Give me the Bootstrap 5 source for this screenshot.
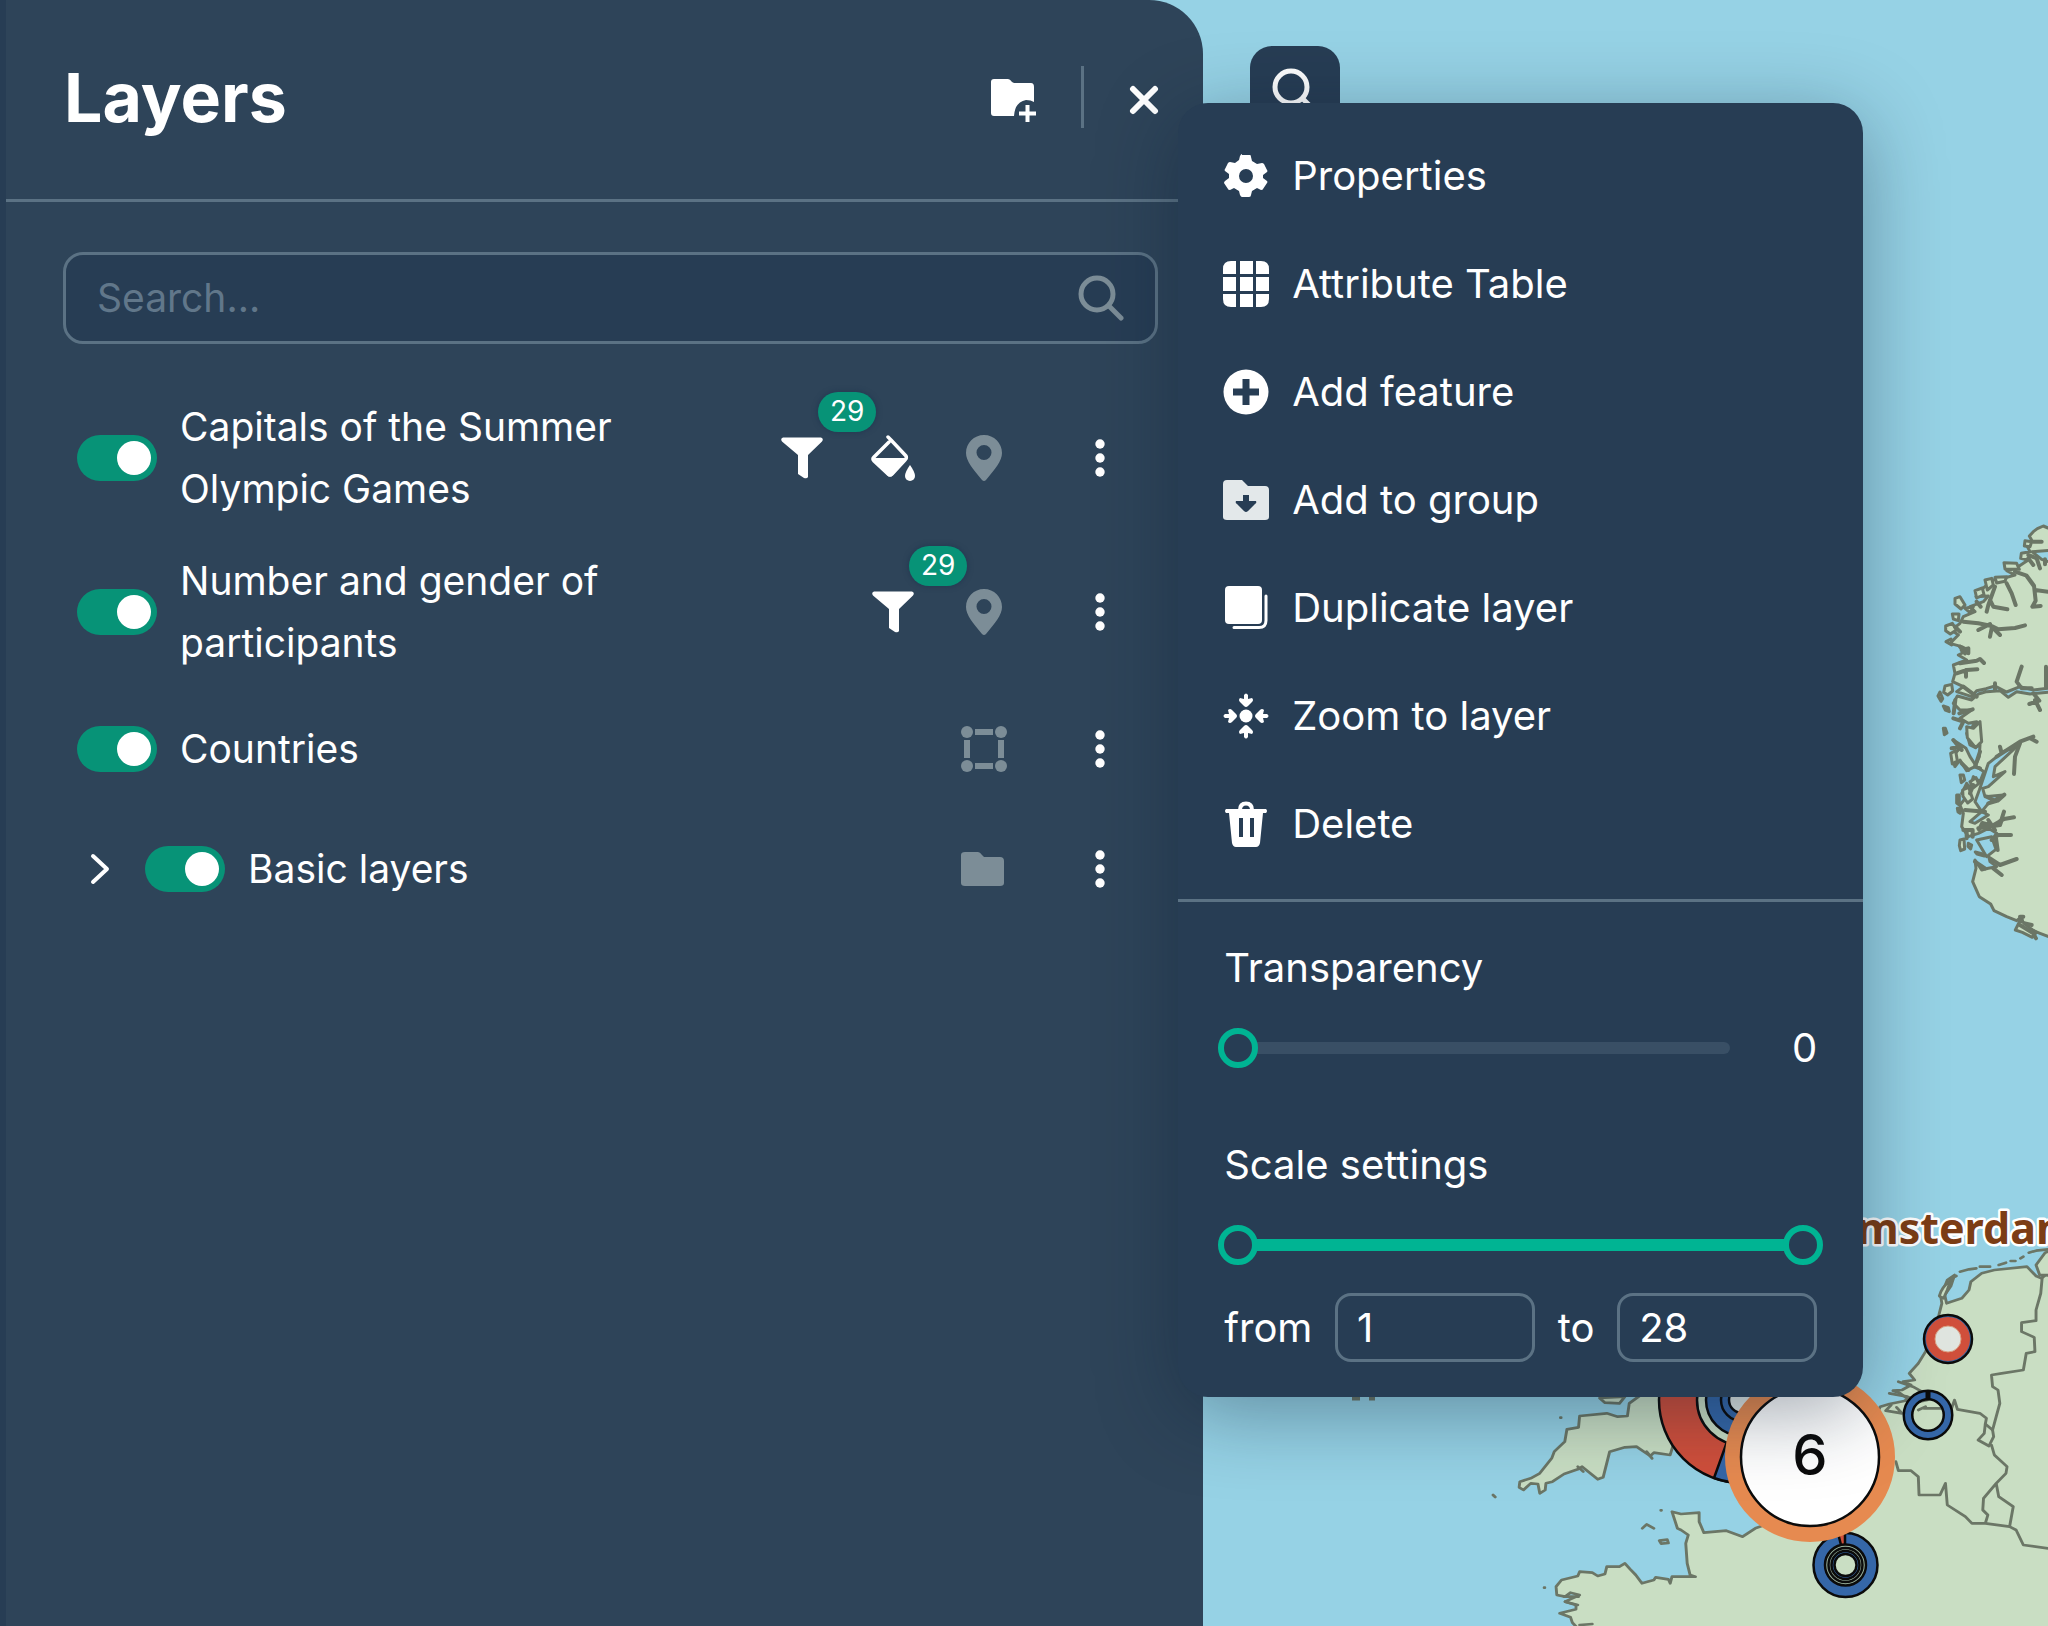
<!DOCTYPE html>
<html lang="en">
<head>
<meta charset="utf-8">
<meta name="viewport" content="width=device-width, initial-scale=1">
<title>Layers</title>
<link rel="stylesheet" href="https://cdn.jsdelivr.net/npm/bootstrap@5.3.0/dist/css/bootstrap.min.css">
<style>
  :root { --deep:#273d54; --panel:#2e4459; --edge:#5b7284; --muted:#7c8d97; --on:#079377; --accent:#00b493; }
  body { font-family:Inter,"Liberation Sans",sans-serif; font-size:40px; line-height:62px; color:#fff; background:#96d2e5; min-height:100vh; overflow:hidden; }
  .stage { min-height:100vh; }
  .geo { position:absolute; inset:0; width:100%; height:100%; }
  .sidebar { width:58.75%; min-height:100vh; background:var(--panel); border-left:6px solid var(--deep); border-top-right-radius:54px; }
  .top-bar { height:202px; border-bottom:3px solid var(--edge); padding:0 44px 0 58px; }
  .top-bar h1 { font-size:68px; line-height:80px; font-weight:700; }
  .vline { width:3px; height:62px; background:var(--edge); margin:0 45px; }
  .lift { padding-bottom:5px; }
  .plain { background:none; border:0; padding:0; color:inherit; display:flex; align-items:center; justify-content:center; }
  svg { display:block; flex:none; }
  .find { height:92px; margin:50px 45px 37px 57px; padding:0 31px; background:var(--deep); border:3px solid var(--edge); border-radius:20px; font-size:39px; }
  .find input { background:none; border:0; color:#fff; min-width:0; outline:0; padding:0; }
  .find input::placeholder { color:#61778a; opacity:1; }
  .find svg, .kind { color:var(--muted); }
  .entry { min-height:120px; padding:15px 80px 15px 71px; font-size:39px; }
  .switch { appearance:none; width:80px; height:46px; margin:0 23px 0 0; border-radius:23px; background:var(--on); flex:none; padding:6px; display:flex; justify-content:flex-end; }
  .switch::before { content:""; width:34px; height:34px; border-radius:50%; background:#fff; }
  .entry label { width:480px; }
  .tools { gap:45px; }
  .more { width:46px; height:62px; margin-left:70px; }
  .count { position:absolute; left:39px; top:-43px; width:58px; height:40px; border-radius:20px; background:var(--on); font-size:28px; line-height:38px; text-align:center; box-shadow:0 0 4px 2px var(--deep); }
  .expander { width:46px; margin-right:22px; }
  .map-find { position:absolute; left:calc(100% + 47px); top:46px; width:90px; height:90px; border-radius:22px; background:var(--deep); z-index:1; }
  .context { position:absolute; left:calc(100% - 25px); top:103px; width:685px; background:var(--deep); border-radius:30px; z-index:2; box-shadow:0 16px 80px rgba(10,30,50,.38); padding-top:19px; }
  .context .act { width:100%; height:108px; padding:0 45px; gap:23px; justify-content:flex-start; }
  .lower { border-top:3px solid var(--edge); margin-top:21px; padding:35px 46px 35px; }
  .slide { height:40px; margin:29px 0 66px -6px; }
  input[type=range] { appearance:none; background:none; height:40px; margin:0; padding:0; flex:none; }
  .fade-range { width:512px; }
  input[type=range]::-webkit-slider-runnable-track { height:12px; border-radius:6px; background:#394f65; }
  input[type=range]::-webkit-slider-thumb { appearance:none; width:40px; height:40px; margin-top:-14px; border-radius:50%; border:6px solid var(--accent); background:var(--deep); pointer-events:auto; }
  .pair { position:relative; height:40px; margin:29px -6px 28px; }
  .pair::before { content:""; position:absolute; left:20px; right:20px; top:14px; height:12px; background:var(--accent); }
  .pair input { position:absolute; inset:0; width:100%; pointer-events:none; }
  .pair input::-webkit-slider-runnable-track { background:none; }
  .num { width:200px; height:69px; background:none; border:3px solid var(--edge); border-radius:16px; color:#fff; padding:0 19px; }
</style>
<script src="https://cdn.jsdelivr.net/npm/bootstrap@5.3.0/dist/js/bootstrap.bundle.min.js"></script>
</head>
<body>
<svg width="0" height="0" class="position-absolute" aria-hidden="true">
  <symbol id="funnel" viewBox="0 0 46 46"><path fill="currentColor" d="M4 2.500h38q3 1 1 4L29 20v22q-1 2-4 1l-6-4V20L3 6.500q-2-3 1-4z"/></symbol>
  <symbol id="pin" viewBox="0 0 46 46"><path fill="currentColor" fill-rule="evenodd" d="M23 0C13 0 5 8 5 18c0 8 7 16 16 27q2 2 4 0c9-11 16-19 16-27C41 8 33 0 23 0zm0 10a7.500 7.500 0 1 1 0 15a7.500 7.500 0 1 1 0-15z"/></symbol>
  <symbol id="dots" viewBox="0 0 46 46"><g fill="currentColor"><circle cx="23" cy="9" r="4.700"/><circle cx="23" cy="23" r="4.700"/><circle cx="23" cy="37" r="4.700"/></g></symbol>
  <symbol id="lens" viewBox="0 0 46 46"><g fill="none" stroke="currentColor" stroke-width="5" stroke-linecap="round"><circle cx="19" cy="19" r="16"/><path d="M31 31l12 12"/></g></symbol>
</svg>
<div class="stage position-relative">
  <svg class="geo" viewBox="0 0 2048 1626" preserveAspectRatio="xMinYMin slice" role="img" aria-label="Map of Europe">
    <!-- Norway -->
    <g transform="translate(1860 500) scale(.33333)" stroke="#6b7666" stroke-width="9" stroke-linejoin="round" stroke-linecap="round" fill="#c9dec3">
      <path d="M580 90L564 84 550 78 532 86 520 95 508 108 516 122 502 140 510 155 484 160 482 175 505 180 490 190 468 205 440 212 465 225 430 235 400 240 372 262 348 290 385 288 370 305 330 320 345 335 310 350 300 370 275 390 295 405 270 430 305 440 325 450 295 465 320 480 280 495 285 520 278 545 310 560 290 575 335 590 350 572 378 566 405 558 440 576 480 560 520 570 564 565 580 560V575L510 582 470 575 445 592 420 572 380 575 355 582 335 600 292 588 280 610 300 630 335 630 300 655 325 670 350 665 320 700 330 735 345 742 360 735 358 770 345 800 320 812 300 780 285 800 275 770 300 745 280 720 318 745 330 770 350 800 372 815 360 845 340 830 330 865 320 850 305 880 320 890 300 915 310 940 305 980 325 1010 355 1000 385 985 410 1000 395 1020 408 1040 385 1065 390 1085 410 1100 385 1105 365 1110 345 1080 348 1105 338 1145 358 1190 392 1212 402 1232 440 1250 470 1262 485 1250 490 1275 515 1290 540 1300 580 1315z"/>
      <g fill="#96d2e5"><path d="M375 820L385 790 430 755 470 740 405 800 400 830 435 815 385 860 368 865 375 890 430 885 385 910 365 935 345 905 358 870z"/><path d="M330 965L365 935 385 945 345 970zM350 1020L395 1010 408 1048 380 1070zM516 155L580 150V190L545 178z"/></g>
      <g><path d="M432 188L470 190 478 208 435 207zM495 122L515 125 510 140 493 138zM375 240l20-5 5 20-18 15zM405 232l35-2-5 14-25 5zM345 272l22-8 5 20-22 10zM285 295l15-5 15 25-12 12-18-15zM315 325l25-5-10 18zM277 342l20 0-2 20-15-5zM257 378l20-8 12 20-18 12-14-10zM258 425l15-8 2 18zM255 558l20-5 3 20-15 12-12-8zM234 588l6-12 8 20-5 8zM250 618l15 5 3 12-12-5zM250 685l6 0 5 14-8 5zM272 760l15-8 5 30-15 10zM300 825l10 0 4 15-10 8zM308 870l18-8 12 35-15 12-14-20zM330 845l18-12 8 18-15 12zM290 885l8 0 0 30-8-6zM292 925l6 0 3 15-7-4zM300 1020l12-3 2 30-12 5-4-15zM325 1030l10 5-3 12-8-8zM346 1056l22 6 5 6-22-6zM466 1290l15-30 30 25 18 12-12 15-30-15zM320 680l20 5 20-20 5 60-18 18-25-30z"/></g>
      <g fill="none" stroke-width="12"><path d="M520 125h25M505 165l25 10 10 30M505 175l15 20M555 178v15M465 215l35 12 22 30 5 45-10 18 25-2M500 228l20 28M525 270l39 5M440 250l15 30 12 35M405 260l-20 55-5 20M350 305l12 15M390 300l10 20 42 8M310 365l45 5 40 8 20 10 50-4 30-8M355 390l35-18M395 385l-5 25M405 390l15 15M285 380l15 15M305 450l20-5 0 15M300 490l50-8 10-5 12 12M290 520l30-10 32-2M318 510v20M286 600l-5 40M298 640l40-12M280 655l30 10-10 20M280 720l25 30M275 745l30-5M360 755l-15 45M305 790l20 20M345 800l15 5M340 855l-10 25M420 740l5 20M410 770l70-45 40-15M510 715l20 10M480 730l-15 40-3 52M385 910l28-8 20-18M380 890l20 10M375 935l-60-5M432 935l-8 25-25 20M462 952l-30 5-35 20-30-8-10 20M385 960l20 30M355 985l65-10 5-15M395 1020l20-15h38M408 1015l5 35M390 1075l30 20 50-18M400 1105l25 20M485 500l-15 45 15 20 30 0M558 500l0 60M520 580l18 22-30 10M525 600l15 30M405 550v20M310 560l40 30M320 995v20M310 990h28v20M480 1250l10 0M480 1275l40 25 8 15M495 1270l20 5M345 1085l30 20M300 440l15 20"/></g>
    </g>
    <!-- Britain, France and the Low Countries -->
    <g transform="translate(1480 1200) scale(.36224 .33333)" stroke="#6b7666" stroke-width="8" stroke-linejoin="round" stroke-linecap="round" fill="#c9dec3">
      <path d="M330 594L345 608 385 610 400 590z"/>
      <path d="M450 580L412 610 407 648 380 650 350 640 275 648 272 682 240 688 234 725 205 755 198 775 165 820 140 835 110 845 108 862 120 870 140 850 160 852 165 880 180 870 182 850 200 845 232 822 270 808 282 800 325 838 340 832 358 755 400 742 432 740 470 768 480 758 525 765 532 740 640 740V580z"/>
      <path d="M270 1285L255 1268 250 1252 220 1240 265 1228 265 1215 235 1205 275 1185 250 1178 235 1190 212 1185 210 1160 225 1140 270 1128 275 1115 310 1118 325 1128 345 1122 350 1100 385 1100 400 1090 415 1108 430 1125 447 1150 480 1140 485 1132 520 1138 525 1150 530 1130 595 1130 580 1125 572 1090 568 1030 575 1005 555 990 545 985 530 935 555 942 605 938 605 965 618 998 680 992 725 1010 760 985 800 970 860 880 950 800 1060 720 1105 620 1130 612 1185 600 1160 580 1140 572 1165 570 1190 555 1168 545 1200 540 1185 520 1210 490 1230 455 1255 400 1268 340 1275 310 1272 290 1290 240 1310 225 1300 258 1283 285 1288 310 1330 295 1350 270 1355 245 1385 220 1420 210 1510 200 1535 228 1550 235 1562 225 1590 230V1285z"/>
      <path d="M1268 288Q1275 260 1300 240L1290 270 1280 295zM1535 195L1560 158 1580 150V225H1545z"/>
      <g fill="none"><path d="M1300 235L1315 228M1325 215L1350 208 1370 205M1380 200H1408M1432 195L1452 188M1465 183H1478M1492 175L1500 170M1515 158L1535 152 1568 148"/>
      <path d="M1552 232L1548 280 1535 330 1535 362 1495 368 1495 395 1530 412 1532 455 1508 460 1500 510 1440 520 1412 525 1415 560 1430 570 1435 610 1425 650 1415 690 1395 672 1398 655 1380 640 1318 628 1310 600 1302 625 1225 625"/>
      <path d="M1395 672L1392 700 1375 720 1405 738 1418 710 1415 690M1412 735L1420 765 1455 800 1452 820 1425 850 1390 895 1388 930 1402 945 1395 970 1358 970 1340 950 1290 915 1285 850 1270 885 1212 885 1210 830 1190 812 1155 812 1148 785M1425 850L1432 890 1472 920 1462 980 1395 970M1462 980L1480 990 1500 1035 1568 1045"/>
      <path d="M1135 615L1120 632 1165 640 1150 622M1175 600L1190 610 1235 600M1155 545L1195 560 1220 575M1130 580L1180 590 1215 605M1210 630L1230 620M232 1190L272 1190M235 1205L270 1215M275 1275L310 1272M460 755L475 775M270 800L285 815"/>
      <path d="M222 653h2M36 885l6 6M177 1163h2M499 931h2M448 985l12-12 20 12M495 1022l22-3 3 10-20 2z"/></g>
    </g>
    <path d="M1352 1398h8M1369 1398h6" stroke="#6b7666" stroke-width="5"/>
    <!-- chart pins -->
    <g stroke="#0b0b0b" stroke-width="2.500">
      <circle cx="1742" cy="1400" r="83" fill="#d04f3b"/><path d="M1742 1400L1714 1478A83 83 0 0 0 1800 1459z" fill="#3567a8"/>
      <circle cx="1742" cy="1400" r="45" fill="#c9dec3"/><circle cx="1742" cy="1400" r="36" fill="#3567a8"/><circle cx="1742" cy="1400" r="21" fill="#3567a8"/><circle cx="1742" cy="1400" r="13" fill="#dfe6e3"/>
      <circle cx="1845.500" cy="1565" r="32" fill="#3567a8"/><path d="M1838 1533L1841 1545h4v-13z" fill="#d04f3b"/>
      <circle cx="1845.500" cy="1565" r="20.500" fill="#9db6a0"/><circle cx="1845.500" cy="1565" r="17" fill="#9db6a0"/><circle cx="1845.500" cy="1565" r="14" fill="#3567a8" /><circle cx="1845.500" cy="1565" r="11" fill="#c9dec3"/>
      <circle cx="1948" cy="1339" r="24" fill="#3567a8"/><circle cx="1948" cy="1339" r="17.500" fill="none" stroke="#d04f3b" stroke-width="9"/><circle cx="1948" cy="1339" r="13" fill="#e0e5e0" stroke="#e0a080" stroke-width="1"/>
      <circle cx="1928" cy="1415" r="20" fill="none" stroke-width="11"/><circle cx="1928" cy="1415" r="20" fill="none" stroke="#3567a8" stroke-width="6"/><path d="M1928 1391v9" stroke-width="5"/>
      <circle cx="1810" cy="1457" r="77" fill="#fff" stroke="#e68a50" stroke-width="16"/><circle cx="1810" cy="1457" r="69" fill="#fff"/>
    </g>
    <text x="1810" y="1475" text-anchor="middle" font-size="56" font-weight="500" fill="#0b0b0b">6</text>
    <text x="1827" y="1244" font-family="'Noto Sans','Open Sans',sans-serif" font-size="43" font-weight="700" fill="#7c3d15" stroke="#fff" stroke-width="5" stroke-linejoin="round" paint-order="stroke">Amsterdam</text>
  </svg>

  <aside class="sidebar position-relative">
    <header class="top-bar d-flex align-items-center">
      <h1 class="m-0 me-auto lift">Layers</h1>
      <button class="plain" aria-label="Add group"><svg width="46" height="46" viewBox="0 0 46 46"><path fill="#fff" d="M4 2h14q2 0 4 3l2 1h17q3 0 3 4v15q-3-2-8-2-11 2-12 16H4q-3 0-3-3V5q0-3 3-3z"/><path d="M37.500 28v17M29 36.500h17" stroke="#fff" stroke-width="4"/></svg></button>
      <span class="lift"><span class="vline d-block"></span></span>
      <button class="plain" aria-label="Close"><svg width="30" height="30" viewBox="0 0 30 30"><path d="M4 4l22 22M26 4L4 26" stroke="#fff" stroke-width="6" stroke-linecap="round"/></svg></button>
    </header>

    <div class="find d-flex align-items-center">
      <input class="flex-grow-1" type="search" placeholder="Search..." aria-label="Search layers">
      <svg width="46" height="46"><use href="#lens"/></svg>
    </div>

    <div class="entry d-flex align-items-center">
      <input class="switch" type="checkbox" role="switch" id="l1" checked>
      <label for="l1">Capitals of the Summer Olympic Games</label>
      <div class="tools d-flex align-items-center ms-auto">
        <span class="position-relative"><svg width="46" height="46"><use href="#funnel"/></svg><span class="count">29</span></span>
        <svg width="46" height="46" viewBox="0 0 46 46"><path d="M18 2l3 3 15 16q1 2-1 4L22 39q-2 2-4 0L4 26q-2-2 0-4L19 7" fill="none" stroke="#fff" stroke-width="3.500" stroke-linecap="round" stroke-linejoin="round"/><path d="M3 23h35L22 41q-2 1-4 0z" fill="#fff"/><path d="M40 30q5 7 5 11a5 5 0 0 1-10 0q0-4 5-11z" fill="#fff"/></svg>
        <svg class="kind" width="46" height="46"><use href="#pin"/></svg>
      </div>
      <button class="plain more" aria-label="Layer menu"><svg width="46" height="46"><use href="#dots"/></svg></button>
    </div>
    <div class="entry d-flex align-items-center">
      <input class="switch" type="checkbox" role="switch" id="l2" checked>
      <label for="l2">Number and gender of participants</label>
      <div class="tools d-flex align-items-center ms-auto">
        <span class="position-relative"><svg width="46" height="46"><use href="#funnel"/></svg><span class="count">29</span></span>
        <svg class="kind" width="46" height="46"><use href="#pin"/></svg>
      </div>
      <button class="plain more" aria-label="Layer menu"><svg width="46" height="46"><use href="#dots"/></svg></button>
    </div>
    <div class="entry d-flex align-items-center">
      <input class="switch" type="checkbox" role="switch" id="l3" checked>
      <label for="l3">Countries</label>
      <svg class="kind ms-auto" width="46" height="46" viewBox="0 0 46 46"><g fill="currentColor"><circle cx="6" cy="6" r="6"/><circle cx="40" cy="6" r="6"/><circle cx="6" cy="40" r="6"/><circle cx="40" cy="40" r="6"/><path d="M14 3h18v6H14zM14 37h18v6H14zM3 14h6v18H3zM37 14h6v18h-6z"/></g></svg>
      <button class="plain more" aria-label="Layer menu"><svg width="46" height="46"><use href="#dots"/></svg></button>
    </div>
    <div class="entry d-flex align-items-center">
      <button class="plain expander" aria-label="Expand group"><svg width="46" height="46" viewBox="0 0 46 46"><path d="M16 10l14 13-14 13" fill="none" stroke="#fff" stroke-width="4" stroke-linecap="round" stroke-linejoin="round"/></svg></button>
      <input class="switch" type="checkbox" role="switch" id="l4" checked>
      <label for="l4">Basic layers</label>
      <svg class="kind ms-auto" width="46" height="46" viewBox="0 0 46 46"><path fill="currentColor" d="M4 6h13q2 0 4 3l2 2h16q4 0 4 4v22q0 3-4 3H4q-4 0-4-3V9q0-3 4-3z"/></svg>
      <button class="plain more" aria-label="Layer menu"><svg width="46" height="46"><use href="#dots"/></svg></button>
    </div>

    <button class="plain map-find" aria-label="Search the map"><svg width="46" height="46"><use href="#lens"/></svg></button>

    <div class="context">
      <button class="plain act"><svg width="46" height="46" viewBox="0 0 46 46"><path fill="#fff" fill-rule="evenodd" d="M19 2h8q1 0 1 2l1 4 5 3 5-1q1 0 2 1l3 6q1 1 0 2l-4 3v3l4 3q1 1 0 2l-4 6q0 1-2 1l-4-2-5 3-1 4q0 2-2 2h-7q-1 0-2-2l-1-4-5-3-4 2q-2 0-2-1l-4-6q0-1 1-2l4-3v-4l-4-3q-1-1 0-2l3-6q1-1 2-1l5 1 4-3 1-4q1-2 2-2zM23 16a7 7 0 1 0 0 14a7 7 0 1 0 0-14z"/></svg>Properties</button>
      <button class="plain act"><svg width="46" height="46" viewBox="0 0 46 46"><path fill="#fff" d="M8 0h5v13H0V8q0-8 8-8zM17 0h13v13H17zM33 0h5q8 0 8 8v5H33zM0 16h13v14H0zM17 16h13v14H17zM33 16h13v14H33zM0 33h13v13H8q-8 0-8-8zM17 33h13v13H17zM33 33h13v5q0 8-8 8h-5z"/></svg>Attribute Table</button>
      <button class="plain act"><svg width="46" height="46" viewBox="0 0 46 46"><circle cx="23" cy="23" r="22.500" fill="#fff"/><path d="M23 10v26M10 23h26" stroke="#273d54" stroke-width="7"/></svg>Add feature</button>
      <button class="plain act"><svg width="46" height="46" viewBox="0 0 46 46"><path fill="#e3e8ea" d="M4 3h15l6 6h17q4 0 4 4v27q0 3-4 3H4q-4 0-4-3V7q0-4 4-4z"/><path fill="#273d54" d="M20 18h6v6h7q1 2-1 3l-7 7q-2 2-4 0l-7-7q-2-1-1-3h7z"/></svg>Add to group</button>
      <button class="plain act"><svg width="46" height="46" viewBox="0 0 46 46"><rect x="2" y="1" width="37" height="38" rx="4" fill="#fff"/><path d="M11 42.500h25q7 0 7-7V11" fill="none" stroke="#fff" stroke-width="3" stroke-linecap="round"/></svg>Duplicate layer</button>
      <button class="plain act"><svg width="46" height="46" viewBox="0 0 46 46"><g fill="#fff"><circle cx="23" cy="23" r="6.500"/><g id="arw"><path d="M21 2q2-3 4 0v4l4-1q2 2 0 4l-4 4q-2 2-4 0l-4-4q-2-2 0-4l4 1z"/></g><use href="#arw" transform="rotate(90 23 23)"/><use href="#arw" transform="rotate(180 23 23)"/><use href="#arw" transform="rotate(270 23 23)"/></g></svg>Zoom to layer</button>
      <button class="plain act"><svg width="46" height="46" viewBox="0 0 46 46"><path d="M17 9q0-6.500 6-6.500T29 9" fill="none" stroke="#fff" stroke-width="4"/><path fill="#fff" fill-rule="evenodd" d="M3 8h40q2 2 0 4h-3l-3 30q-1 4-4 4H13q-3 0-4-4L6 12H3q-2-2 0-4zM16 17v19h4V17zM27 17v19h4V17z"/></svg>Delete</button>

      <div class="lower">
        <label class="d-block" for="tr">Transparency</label>
        <div class="slide d-flex align-items-center">
          <input class="fade-range" id="tr" type="range" min="0" max="100" value="0">
          <output class="ms-auto p-0" for="tr">0</output>
        </div>
        <div>Scale settings</div>
        <div class="pair">
          <input type="range" min="1" max="28" value="1" aria-label="Minimum scale">
          <input type="range" min="1" max="28" value="28" aria-label="Maximum scale">
        </div>
        <div class="d-flex align-items-center justify-content-between">
          <label for="zf">from</label><input class="num" id="zf" type="text" value="1">
          <label for="zt">to</label><input class="num" id="zt" type="text" value="28">
        </div>
      </div>
    </div>
  </aside>
</div>
</body>
</html>
